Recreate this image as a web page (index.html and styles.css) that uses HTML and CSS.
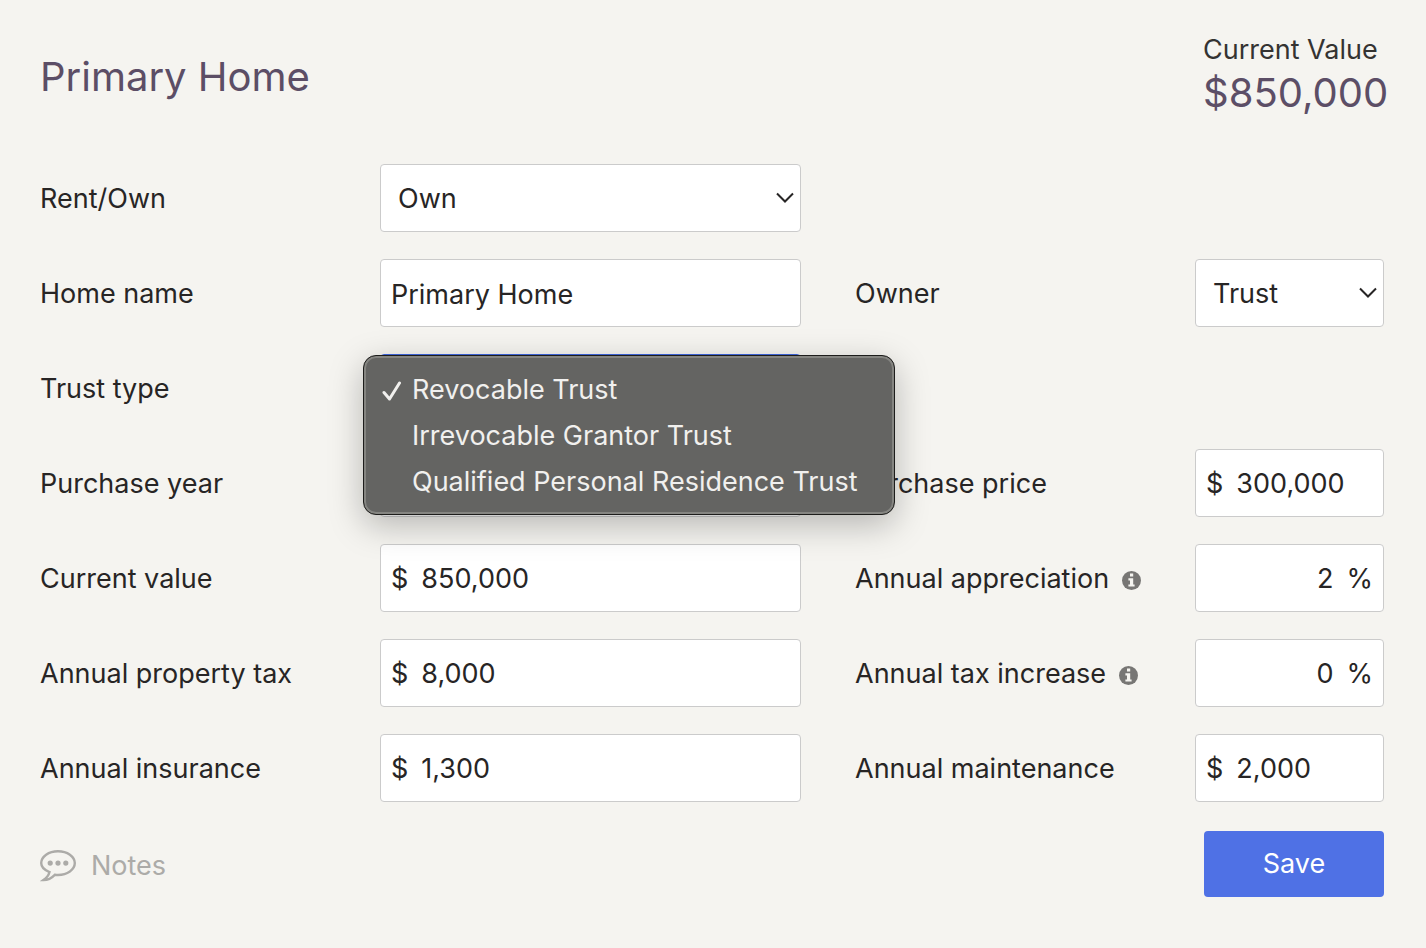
FILE: index.html
```html
<!DOCTYPE html>
<html lang="en">
<head>
<meta charset="utf-8">
<meta name="viewport" content="width=device-width, initial-scale=1">
<title>Primary Home</title>
<link rel="stylesheet" href="styles.css">
</head>
<body>
<main class="page">
  <header class="header">
    <h1 class="title">Primary Home</h1>
    <div class="summary">
      <span class="summary-label">Current Value</span>
      <strong class="summary-value">$850,000</strong>
    </div>
  </header>

  <form class="form">
    <label class="label" for="rent-own">Rent/Own</label>
    <div class="field">
      <select class="control select" id="rent-own"><option>Own</option><option>Rent</option></select>
      <svg class="chevron" viewBox="0 0 18 12" aria-hidden="true"><path d="M1 1.5 9 9.5 17 1.5"/></svg>
    </div>

    <label class="label first" for="home-name">Home name</label>
    <div class="field"><input class="control" id="home-name" type="text" value="Primary Home"></div>
    <label class="label second" for="owner">Owner</label>
    <div class="field">
      <select class="control select" id="owner"><option>Trust</option></select>
      <svg class="chevron" viewBox="0 0 18 12" aria-hidden="true"><path d="M1 1.5 9 9.5 17 1.5"/></svg>
    </div>

    <label class="label first" for="trust-type">Trust type</label>
    <div class="field open">
      <select class="control select" id="trust-type"><option>Revocable Trust</option><option>Irrevocable Grantor Trust</option><option>Qualified Personal Residence Trust</option></select>
      <ul class="menu" role="listbox" aria-label="Trust type">
        <li class="option" role="option" aria-selected="true">
          <svg class="check" viewBox="0 0 20 20" aria-hidden="true"><path d="M2 11.5 7.5 18 17.5 2"/></svg>
          Revocable Trust
        </li>
        <li class="option" role="option" aria-selected="false">Irrevocable Grantor Trust</li>
        <li class="option" role="option" aria-selected="false">Qualified Personal Residence Trust</li>
      </ul>
    </div>

    <label class="label first" for="purchase-year">Purchase year</label>
    <div class="field"><input class="control" id="purchase-year" type="text"></div>
    <label class="label second" for="purchase-price">Purchase price</label>
    <div class="field control money"><span>$</span><input class="amount" id="purchase-price" type="text" value="300,000"></div>

    <label class="label first" for="current-value">Current value</label>
    <div class="field control money"><span>$</span><input class="amount" id="current-value" type="text" value="850,000"></div>
    <label class="label second" for="appreciation">Annual appreciation
      <svg class="info" viewBox="0 0 19 19" aria-hidden="true"><circle cx="9.5" cy="9.5" r="9.5"/><path d="M8 2.6h3.2v2.8H8zM6.4 7.2h4.8v6.2h1.4v2.2H6.4v-2.2H8V9.4H6.4z"/></svg>
    </label>
    <div class="field control percent"><input class="amount" id="appreciation" type="text" value="2"><span>%</span></div>

    <label class="label first" for="property-tax">Annual property tax</label>
    <div class="field control money"><span>$</span><input class="amount" id="property-tax" type="text" value="8,000"></div>
    <label class="label second" for="tax-increase">Annual tax increase
      <svg class="info" viewBox="0 0 19 19" aria-hidden="true"><circle cx="9.5" cy="9.5" r="9.5"/><path d="M8 2.6h3.2v2.8H8zM6.4 7.2h4.8v6.2h1.4v2.2H6.4v-2.2H8V9.4H6.4z"/></svg>
    </label>
    <div class="field control percent"><input class="amount" id="tax-increase" type="text" value="0"><span>%</span></div>

    <label class="label first" for="insurance">Annual insurance</label>
    <div class="field control money"><span>$</span><input class="amount" id="insurance" type="text" value="1,300"></div>
    <label class="label second" for="maintenance">Annual maintenance</label>
    <div class="field control money"><span>$</span><input class="amount" id="maintenance" type="text" value="2,000"></div>
  </form>

  <footer class="footer">
    <button class="notes" type="button">
      <svg class="bubble" viewBox="0 0 36 32" aria-hidden="true"><path class="bubble-line" d="M9.5 22.1C4.500 20.200 1.200 17 1.200 13.100 1.200 6.500 8.700 1.200 18 1.200s16.800 5.300 16.800 11.900S27.300 25 18 25c-1.100 0-2.200-.1-3.200-.2C12 27.700 8 30 3.400 30.100c2.700-1.800 5.300-4.600 6.100-8z"/><circle cx="10.200" cy="13.100" r="2.600"/><circle cx="18" cy="13.100" r="2.600"/><circle cx="25.800" cy="13.100" r="2.600"/></svg>
      Notes
    </button>
    <button class="save" type="button">Save</button>
  </footer>
</main>
</body>
</html>
```
FILE: styles.css
```css
* {
  box-sizing: border-box;
}

body {
  margin: 0;
  background: #f5f4f0;
  color: #272525;
  font: 27px/34px Inter, "Liberation Sans", sans-serif;
}

.page {
  padding: 32px 42px 50px 40px;
}

.header {
  display: flex;
  justify-content: space-between;
  align-items: center;
  margin-bottom: 46px;
}

.title {
  margin: 0;
  padding-top: 4px;
  color: #5c4e66;
  font-size: 40px;
  font-weight: 400;
  line-height: 50px;
}

.summary {
  width: 181px;
  display: flex;
  flex-direction: column;
  white-space: nowrap;
}

.summary-label {
  line-height: 36px;
  color: #343332;
}

.summary-value {
  color: #5c4e66;
  font-size: 40px;
  font-weight: 400;
  line-height: 50px;
}

.form {
  display: grid;
  grid-template-columns: 340px minmax(0, 1fr) 394px 189px;
  grid-auto-rows: 68px;
  row-gap: 27px;
}

.label {
  display: flex;
  align-items: center;
  padding-top: 2px;
  white-space: nowrap;
}

.first {
  grid-column: 1;
}

.second {
  padding-left: 54px;
}

.field {
  display: grid;
}

.control {
  width: 100%;
  height: 100%;
  min-width: 0;
  margin: 0;
  padding: 2px 10px 0;
  border: 1px solid #cbcbcb;
  border-radius: 4px;
  background: #fff;
  color: inherit;
  font: inherit;
}

.select {
  grid-area: 1 / 1;
  appearance: none;
  padding: 2px 17px 0;
}

.chevron {
  grid-area: 1 / 1;
  place-self: center end;
  width: 18px;
  height: 12px;
  margin-right: 7px;
  fill: none;
  stroke: #272525;
  stroke-width: 2;
  pointer-events: none;
}

.money,
.percent {
  display: flex;
  align-items: center;
  gap: 13px;
  padding: 2px 10px 0;
}

.amount {
  flex: 1;
  width: 0;
  min-width: 0;
  padding: 0;
  border: 0;
  background: transparent;
  color: inherit;
  font: inherit;
  outline: none;
}

.percent .amount {
  text-align: right;
}

.info {
  width: 19px;
  height: 19px;
  margin: 3px 0 0 13px;
  fill: #777674;
}

.info path {
  fill: #f5f4f0;
}

.open {
  position: relative;
}

.open .select {
  border-color: #3f66dd;
}

.menu {
  position: absolute;
  z-index: 1;
  top: 1px;
  left: -17px;
  width: 532px;
  margin: 0;
  padding: 11px 0 9px;
  border: 1px solid #1d1d1b;
  border-radius: 13px;
  background: #646462;
  box-shadow: inset 0 0 0 2px #858581, 0 10px 34px rgba(0, 0, 0, 0.26);
  color: #f1f0ee;
  font-size: 27px;
  list-style: none;
}

.option {
  display: flex;
  align-items: center;
  height: 46px;
  padding-left: 48px;
  white-space: nowrap;
}

.check {
  width: 20px;
  height: 20px;
  margin: 2px 10px 0 -30px;
  fill: none;
  stroke: currentColor;
  stroke-width: 3;
  stroke-linecap: round;
  stroke-linejoin: round;
}

.footer {
  display: flex;
  justify-content: space-between;
  align-items: center;
  margin-top: 29px;
}

.notes {
  display: flex;
  align-items: center;
  gap: 15px;
  padding: 4px 0 0;
  border: 0;
  background: transparent;
  color: #acaba8;
  font: inherit;
}

.bubble {
  width: 36px;
  height: 32px;
  fill: currentColor;
}

.bubble-line {
  fill: none;
  stroke: currentColor;
  stroke-width: 2.400;
}

.save {
  width: 180px;
  height: 66px;
  border: 0;
  border-radius: 4px;
  background: #4f71e5;
  color: #fff;
  font: inherit;
}
```
